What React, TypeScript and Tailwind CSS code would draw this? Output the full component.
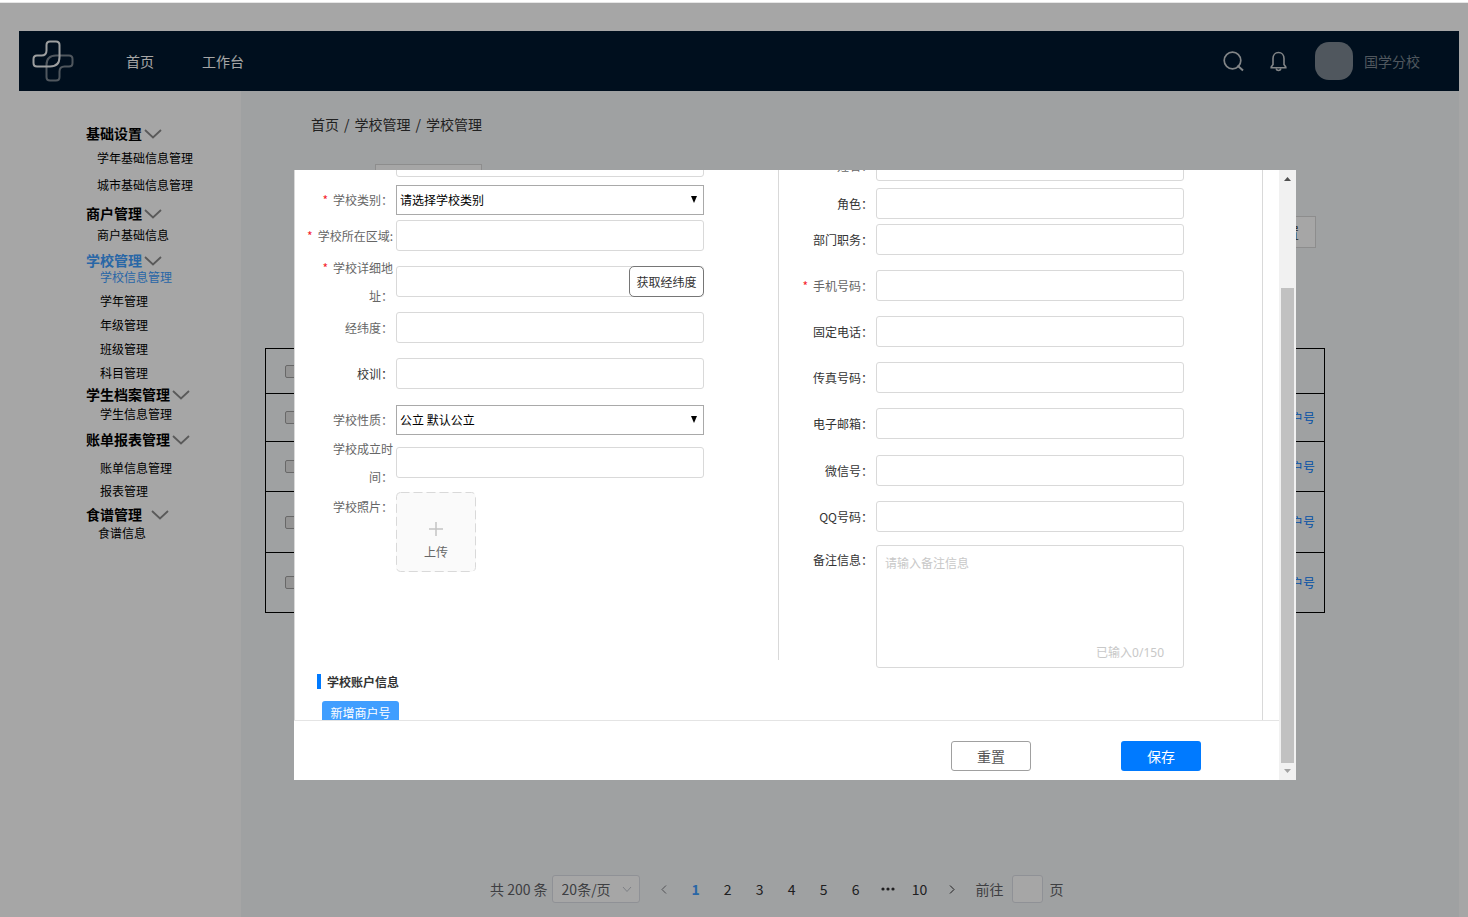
import clsx from "clsx";
import { ReactNode, useState } from "react";

const MENU = [
  {
    title: "基础设置",
    items: ["学年基础信息管理", "城市基础信息管理"],
    spacing: "",
    list: "pt-2 gap-[9px] pl-[11px]",
  },
  { title: "商户管理", items: ["商户基础信息"], spacing: "mt-[11px]", list: "pt-[5px] pl-[11px]" },
  {
    title: "学校管理",
    items: ["学校信息管理", "学年管理", "年级管理", "班级管理", "科目管理"],
    spacing: "mt-2",
    list: "gap-[6px] pl-[14px]",
  },
  { title: "学生档案管理", items: ["学生信息管理"], spacing: "mt-1", list: "pt-[3px] pl-[14px]" },
  { title: "账单报表管理", items: ["账单信息管理", "报表管理"], spacing: "mt-2", list: "pt-3 gap-[5px] pl-[14px]" },
  { title: "食谱管理", items: ["食谱信息"], spacing: "mt-[6px]", list: "pt-[2px] pl-3" },
];

const ROW_HEIGHTS = ["h-[48px]", "h-[50px]", "h-[61px]", "h-[60px]"];
const PAGES = ["1", "2", "3", "4", "5", "6", "more", "10"];

const INPUT = "h-[31px] w-full rounded-[3px] border border-[#d9d9d9] bg-white px-2 text-xs outline-none";

const Logo = () => (
  <svg width="42" height="42" viewBox="0 0 42 42" fill="none" strokeWidth="2">
    <path
      transform="rotate(180 21 21)"
      stroke="#7b8691"
      d="M18 1.5h6q3.500 0 3.500 3.500V17q0 9.500-9.500 9.500H5q-3.500 0-3.500-3.500V19q0-3.500 3.500-3.500h4.500q5 0 5-5V5q0-3.500 3.500-3.500z"
    />
    <path
      stroke="#f2f4f6"
      d="M18 1.5h6q3.500 0 3.500 3.500V17q0 9.500-9.500 9.500H5q-3.500 0-3.500-3.500V19q0-3.500 3.500-3.500h4.500q5 0 5-5V5q0-3.500 3.500-3.500z"
    />
  </svg>
);

const SearchIcon = () => (
  <svg width="21" height="21" viewBox="0 0 21 21" fill="none" stroke="#c8ccd0" strokeWidth="1.700">
    <circle cx="9.500" cy="9.500" r="8.300" />
    <path d="M14.500 14.500l5.500 5" strokeWidth="2" />
  </svg>
);

const BellIcon = () => (
  <svg width="17" height="21" viewBox="0 0 17 21" fill="none" stroke="#c8ccd0" strokeWidth="1.600">
    <path d="M3 13.500V7.500C3 4 5.300 1.500 8.500 1.500S14 4 14 7.500v6l1.800 2.500v.8H1.200V16z" />
    <path d="M6 17.500c.5 1.500 1.300 2 2.500 2s2-.5 2.500-2" />
  </svg>
);

const Chevron = () => (
  <svg width="18" height="12" viewBox="0 0 18 12" fill="none" stroke="#8a8a8a" strokeWidth="1.800">
    <path d="M1 3l8 7.500L17 3" />
  </svg>
);

type FieldProps = {
  id: string;
  label: string;
  required?: boolean;
  dark?: boolean;
  narrow?: boolean;
  className?: string;
  children?: ReactNode;
};

const Field = ({ id, label, required, dark, narrow, className, children }: FieldProps) => (
  <div className={clsx("flex h-[31px] items-center", className)}>
    <label
      htmlFor={id}
      className={clsx(
        "flex shrink-0 justify-end pr-[3px] text-right text-xs leading-7",
        narrow ? "w-[97px]" : "w-[101px]",
        dark ? "text-[#333]" : "text-[#666]",
      )}
    >
      {required && <span className="mr-[5px] text-[#f5222d]">*</span>}
      <span className={label.length > 6 && !label.endsWith(":") ? "w-[60px]" : "whitespace-nowrap"}>{label}</span>
    </label>
    <div className="relative min-w-0 flex-1">{children ?? <input id={id} className={clsx(INPUT, "block")} />}</div>
  </div>
);

const SelectBox = ({ id, options }: { id: string; options: string[] }) => (
  <>
    <select
      id={id}
      className="block h-[30px] w-full appearance-none border border-[#a9a9a9] bg-white px-[3px] text-xs text-black outline-none"
    >
      {options.map((option) => (
        <option key={option}>{option}</option>
      ))}
    </select>
    <svg className="pointer-events-none absolute top-[11px] right-[7px]" width="6" height="7" viewBox="0 0 6 7">
      <path d="M0 0h6L3 7z" />
    </svg>
  </>
);

const Header = () => (
  <header className="flex h-[60px] items-center bg-[#00182e] pr-[39px] pl-[13px] text-sm text-white">
    <Logo />
    <nav className="ml-[52px] flex gap-12">
      <a href="#home">首页</a>
      <a href="#workbench">工作台</a>
    </nav>
    <div className="ml-auto flex items-center">
      <button aria-label="搜索">
        <SearchIcon />
      </button>
      <button aria-label="通知" className="ml-[26px]">
        <BellIcon />
      </button>
      <div className="ml-7 size-[38px] rounded-[14px] bg-[#7b8691]"></div>
      <span className="ml-[11px] text-[#7b8691]">国学分校</span>
    </div>
  </header>
);

const Sidebar = () => (
  <aside className="w-[222px] shrink-0 bg-white pt-[34px] pl-[67px] text-black">
    {MENU.map((group) => (
      <section key={group.title} className={group.spacing}>
        <h2
          className={clsx(
            "flex h-4 items-center text-sm leading-4 font-bold",
            group.title === "食谱管理" ? "gap-[9px]" : "gap-[2px]",
            group.title === "学校管理" && "text-[#409eff]",
          )}
        >
          {group.title}
          <Chevron />
        </h2>
        <ul className={clsx("flex flex-col text-xs leading-[18px]", group.list)}>
          {group.items.map((item) => (
            <li key={item} className={clsx(item === "学校信息管理" && "text-[#409eff]")}>
              <a href="#menu">{item}</a>
            </li>
          ))}
        </ul>
      </section>
    ))}
  </aside>
);

const CheckBox = () => (
  <input
    type="checkbox"
    aria-label="选择"
    className="ml-[19px] block size-[13px] appearance-none rounded-[2px] border border-[#a0a0a0] bg-[#e4e4e4]"
  />
);

const SchoolTable = () => (
  <table className="w-full border-collapse border border-black">
    <thead>
      <tr className="h-[45px] border-b border-black">
        <th>
          <CheckBox />
        </th>
        <th></th>
      </tr>
    </thead>
    <tbody>
      {ROW_HEIGHTS.map((height) => (
        <tr key={height} className={clsx("border-b border-black", height)}>
          <td>
            <CheckBox />
          </td>
          <td className="pr-[9px] text-right text-xs">
            <a href="#merchant" className="text-[#007aff]">
              商户号
            </a>
          </td>
        </tr>
      ))}
    </tbody>
  </table>
);

const Pagination = () => (
  <div className="mt-auto flex items-center pb-[14px] pl-[249px] text-sm text-[#606266]">
    <span>共 200 条</span>
    <div className="relative ml-1">
      <select
        aria-label="每页条数"
        className="block h-7 w-[88px] appearance-none rounded-[3px] border border-[#dcdfe6] bg-white pl-[9px] outline-none"
      >
        <option>20条/页</option>
      </select>
      <svg
        className="pointer-events-none absolute top-[11px] right-2"
        width="10"
        height="7"
        viewBox="0 0 10 7"
        fill="none"
        stroke="#c0c4cc"
      >
        <path d="M1 1l4 4.500L9 1" />
      </svg>
    </div>
    <button aria-label="上一页" className="ml-2 flex w-8 justify-center">
      <svg width="6" height="9" viewBox="0 0 6 9" fill="none" stroke="#7a7d82">
        <path d="M5 .5l-4 4 4 4" />
      </svg>
    </button>
    {PAGES.map((page) => (
      <button
        key={page}
        aria-label={page === "more" ? "更多" : undefined}
        className={clsx("flex w-8 justify-center", page === "1" ? "font-bold text-[#409eff]" : "text-[#303133]")}
      >
        {page === "more" ? (
          <svg width="14" height="4" viewBox="0 0 14 4" fill="currentColor">
            <circle cx="2" cy="2" r="1.600" />
            <circle cx="7" cy="2" r="1.600" />
            <circle cx="12" cy="2" r="1.600" />
          </svg>
        ) : (
          page
        )}
      </button>
    ))}
    <button aria-label="下一页" className="flex w-8 justify-center">
      <svg width="6" height="9" viewBox="0 0 6 9" fill="none" stroke="#303133">
        <path d="M1 .5l4 4-4 4" />
      </svg>
    </button>
    <label htmlFor="jump" className="ml-2">
      前往
    </label>
    <input id="jump" className="mr-[7px] ml-2 h-7 w-[31px] rounded-[3px] border border-[#dcdfe6] bg-white outline-none" />
    <span>页</span>
  </div>
);

const SchoolForm = () => {
  const [remark, setRemark] = useState("");

  return (
    <div className="-mt-6">
      <div className="grid grid-cols-[484fr_483fr]">
        <div className="mb-2 border-r border-[#d9d9d9] pr-[74px]">
          <Field id="name" label="" />
          <Field id="type" label="学校类别：" required className="mt-[7px]">
            <SelectBox id="type" options={["请选择学校类别"]} />
          </Field>
          <Field id="area" label="学校所在区域:" required className="mt-[5px]" />
          <Field id="address" label="学校详细地址：" required className="mt-[15px]">
            <input id="address" className={clsx(INPUT, "block")} />
            <button className="absolute top-0 right-0 h-[31px] w-[75px] rounded-[5px] border border-[#767676] bg-white text-xs text-[#333]">
              获取经纬度
            </button>
          </Field>
          <Field id="lnglat" label="经纬度：" className="mt-[15px]" />
          <Field id="motto" label="校训：" dark className="mt-[15px]" />
          <Field id="nature" label="学校性质：" className="mt-[15px]">
            <SelectBox id="nature" options={["公立 默认公立"]} />
          </Field>
          <Field id="founded" label="学校成立时间：" className="mt-3" />
          <div className="mt-[14px] flex text-xs text-[#666]">
            <span className="w-[101px] shrink-0 pr-[3px] text-right leading-[30px]">学校照片：</span>
            <button className="relative flex size-20 flex-col items-center rounded-md bg-[#fafafa] pt-[30px]">
              <svg className="absolute inset-0" width="80" height="80" fill="none" stroke="#d9d9d9">
                <rect x=".5" y=".5" width="79" height="79" rx="4" strokeDasharray="9 4" />
              </svg>
              <svg width="14" height="14" viewBox="0 0 14 14" stroke="#c4c4c4" strokeWidth="1.500">
                <path d="M7 0v14M0 7h14" />
              </svg>
              <span className="mt-2 leading-4">上传</span>
            </button>
          </div>
        </div>
        <div className="pt-1 pr-[78px]">
          <Field id="contact" label="姓名：" narrow />
          <Field id="role" label="角色：" dark narrow className="mt-[7px]" />
          <Field id="post" label="部门职务：" dark narrow className="mt-[5px]" />
          <Field id="mobile" label="手机号码：" required narrow className="mt-[15px]" />
          <Field id="phone" label="固定电话：" dark narrow className="mt-[15px]" />
          <Field id="fax" label="传真号码：" dark narrow className="mt-[15px]" />
          <Field id="email" label="电子邮箱：" dark narrow className="mt-[15px]" />
          <Field id="wechat" label="微信号：" dark narrow className="mt-4" />
          <Field id="qq" label="QQ号码：" dark narrow className="mt-[15px]" />
          <div className="mt-[13px] flex text-xs">
            <label htmlFor="remark" className="w-[97px] shrink-0 pr-[3px] text-right leading-[30px] text-[#333]">
              备注信息：
            </label>
            <div className="relative flex-1">
              <textarea
                id="remark"
                maxLength={150}
                value={remark}
                onChange={(e) => setRemark(e.target.value)}
                placeholder="请输入备注信息"
                className="block h-[123px] w-full resize-none rounded-[3px] border border-[#d9d9d9] px-2 py-2 leading-[18px] outline-none placeholder:text-[#c8c8c8]"
              />
              <span className="absolute right-5 bottom-[6px] font-['Noto_Sans','Noto_Sans_CJK_SC',sans-serif] leading-[18px] text-[#c8c8c8]">
                已输入{remark.length}/150
              </span>
            </div>
          </div>
        </div>
      </div>
      <h3 className="mt-[6px] ml-[22px] flex h-[15px] items-center border-l-4 border-[#007aff] pl-[6px] text-xs leading-[14px] font-bold text-[#333]">
        学校账户信息
      </h3>
      <button className="mt-3 ml-[27px] block h-6 w-[77px] rounded-[3px] bg-[#409eff] text-xs text-white">
        新增商户号
      </button>
    </div>
  );
};

const ScrollBar = () => (
  <div className="flex w-[17px] shrink-0 flex-col bg-[#f1f1f1]">
    <svg width="17" height="17" viewBox="0 0 17 17" fill="#505050">
      <path d="M5 11h7L8.500 7z" />
    </svg>
    <div className="mx-[2px] mt-[101px] flex-1 bg-[#c1c1c1]"></div>
    <svg width="17" height="17" viewBox="0 0 17 17" fill="#a3a3a3">
      <path d="M5 6h7l-3.500 4z" />
    </svg>
  </div>
);

const App = () => {
  return (
    <div className="relative flex min-h-screen flex-col bg-white pt-[31px] pr-[9px] pl-[19px] font-['Noto_Sans_CJK_SC',sans-serif]">
      <Header />
      <div className="flex flex-1">
        <Sidebar />
        <main className="flex min-w-0 flex-1 flex-col bg-[#f5f7f9]">
          <div className="flex h-[66px] items-center gap-[5px] pl-[70px] text-sm text-[#333]">
            <a href="#home">首页</a>
            <span>/</span>
            <a href="#school">学校管理</a>
            <span>/</span>
            <span>学校管理</span>
          </div>
          <input
            aria-label="学校名称"
            className="mt-[7px] ml-[134px] h-[31px] w-[107px] border border-[#d9d9d9] bg-white"
          />
          <button className="mt-[21px] mr-[143px] h-8 w-[62px] self-end border border-[#d9d9d9] bg-white text-sm text-[#333]">
            重置
          </button>
          <div className="mt-[100px] mr-[134px] ml-6">
            <SchoolTable />
          </div>
          <Pagination />
        </main>
      </div>

      <div className="absolute inset-x-0 top-0 h-[3px] border-b border-[#e6e6e6] bg-white"></div>
      <div className="absolute inset-x-0 top-[3px] bottom-0 bg-black/35 pt-[167px] pr-[172px] pl-[294px]">
        <div role="dialog" className="flex bg-white">
          <div className="min-w-0 flex-1">
            <div className="h-[550px] overflow-hidden pr-4">
              <div className="h-full overflow-hidden border-x border-[#d9d9d9]">
                <SchoolForm />
              </div>
            </div>
            <div className="flex h-[60px] items-start justify-end gap-[90px] border-t border-[#e4e4e4] pt-5 pr-[78px] text-sm">
              <button className="h-[30px] w-20 rounded-[3px] border border-[#a0a0a0] text-[#555]">重置</button>
              <button className="h-[30px] w-20 rounded-[3px] bg-[#007aff] text-white">保存</button>
            </div>
          </div>
          <ScrollBar />
        </div>
      </div>
    </div>
  );
};

export default App;
